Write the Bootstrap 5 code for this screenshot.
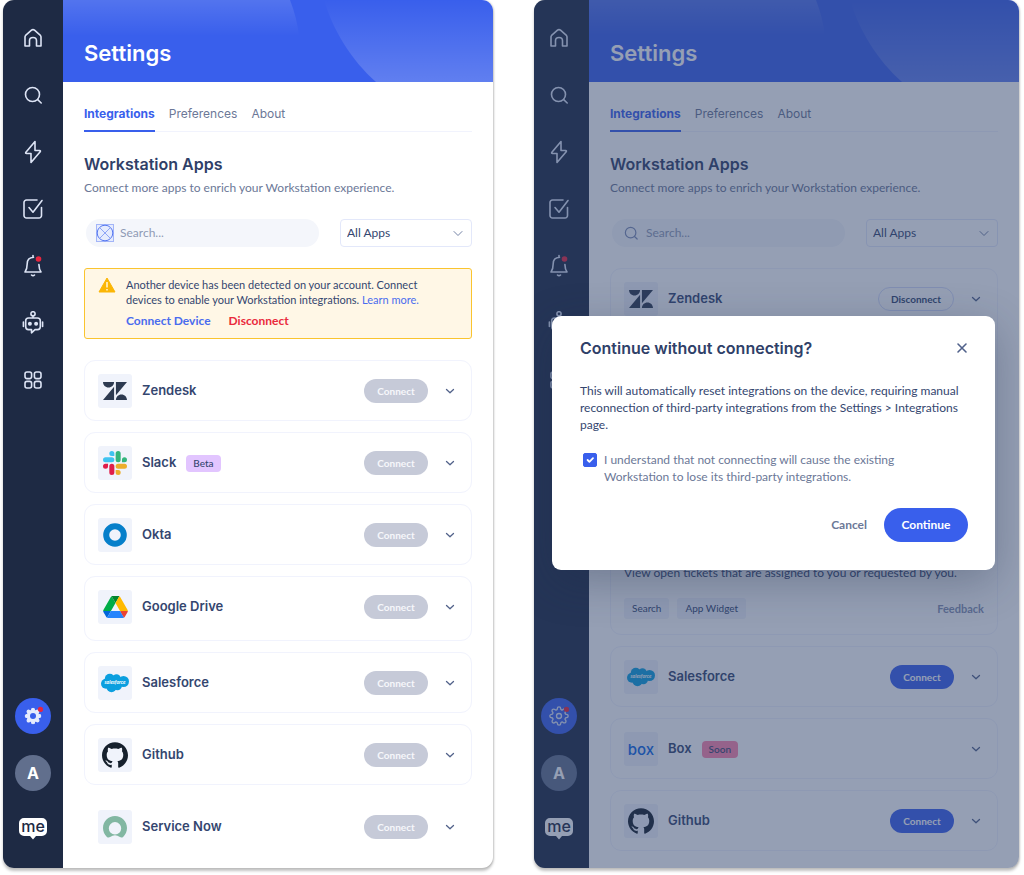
<!DOCTYPE html>
<html lang="en">
<head>
<meta charset="utf-8">
<meta name="viewport" content="width=device-width, initial-scale=1">
<title>Settings – Integrations</title>
<link href="https://cdn.jsdelivr.net/npm/bootstrap@5.3.0/dist/css/bootstrap.min.css" rel="stylesheet">
<style>
  :root { --ink: #34466f; --muted: #6c7897; --brand: #395fec; --night: #1e2a44; --line: #f1f3fd; --tile: #f0f3fb; --head-font: Inter, "Open Sans", sans-serif; }
  body { font-family: Lato, "Open Sans", sans-serif; font-size: 12px; line-height: 18px; color: var(--ink); background: #fff; }
  .stage { gap: 41px; padding: 0 5px 7px 3px; min-height: 100vh; }
  .panel { border-radius: 11px; box-shadow: 0 3px 3px rgba(0,0,0,.24), 1px 0 2px rgba(0,0,0,.14); background: #fff; overflow: hidden; min-width: 0; }
  .panel-a { flex: 490 1 0; }
  .panel-b { flex: 485 1 0; }
  .rail { width: 60px; flex: none; background: var(--night); color: #dde4f5; padding: 26px 0 22px; }
  .rail-b { width: 55px; padding-right: 5px; }
  .rail button { border: 0; padding: 0; background: none; color: inherit; display: flex; align-items: center; justify-content: center; }
  .rail-top { gap: 33px; }
  .rail-bottom { gap: 21px; }
  .rail .disc { width: 36px; height: 36px; border-radius: 50%; }
  .rail .disc-gear { background: var(--brand); }
  .rail .disc-user { background: #616f8d; color: #fff; font: 700 16px/20px var(--head-font); }
  .rail .brand-me { height: 34px; }
  .i { fill: none; stroke: currentColor; stroke-width: 1.6; stroke-linecap: round; stroke-linejoin: round; flex: none; }
  .hero { height: 82px; background: var(--brand); }
  .hero h1 { font: 600 22px/28px var(--head-font); color: #fff; margin: 0; padding: 39px 21px 0; }
  .hero svg { inset: 0; }
  .content { padding: 22px 21px 11px; }
  .tabs { gap: 14px; border-bottom: 1px solid var(--line); font: 400 12px/20px var(--head-font); }
  .tabs a { color: var(--muted); text-decoration: none; padding-bottom: 6px; margin-bottom: -1px; border-bottom: 2px solid transparent; }
  .tabs a.on { color: var(--brand); font-weight: 700; border-color: var(--brand); }
  h2 { font: 600 16px/24px var(--head-font); margin: 0; color: #2f4068; }
  .content h2 { margin-top: 20px; }
  .lede { color: var(--muted); margin: 3px 0 22px; }
  .filters { gap: 21px; padding-left: 2px; }
  .find { height: 28px; border-radius: 14px; background: #f4f6fb; padding: 0 10px; gap: 6px; color: #7d8cb5; min-width: 0; }
  .find input { border: 0; background: none; outline: 0; padding: 0; min-width: 0; color: var(--ink); line-height: 18px; }
  .find input::placeholder { color: #8f9ab5; opacity: 1; }
  .pick { width: 132px; height: 28px; flex: none; font-size: 12px; line-height: 18px; padding: 0 24px 0 6px; color: var(--ink); border: 1px solid #e3e8fa; border-radius: 4px; background-position: right 6px center; background-size: 14px 14px;
    background-image: url("data:image/svg+xml,%3csvg xmlns='http://www.w3.org/2000/svg' viewBox='0 0 14 14' fill='none' stroke='%237382a5' stroke-linecap='round' stroke-linejoin='round'%3e%3cpath d='M3 5.500l4 4 4-4'/%3e%3c/svg%3e"); }
  .notice { margin-top: 21px; padding: 8px 13px; gap: 10px; border: 1px solid #fac42f; border-radius: 3px; background: #fff7e6; font-size: 11px; line-height: 15px; }
  .notice-text { max-width: 312px; }
  .notice a { color: #4a6cee; text-decoration: none; }
  .notice .acts { gap: 18px; font-size: 12px; line-height: 18px; font-weight: 700; margin-top: 5px; }
  .notice .acts button { border: 0; background: none; padding: 0; font-weight: 700; color: #4a6cee; }
  .notice .acts .stop { color: #ea2a3c; }
  .apps { margin-top: 21px; gap: 11px; }
  .app { border: 1px solid var(--line); border-radius: 11px; padding: 13px 15px 12px 13px; }
  .app-tall { padding-bottom: 16px; }
  .app-plain { border-color: transparent; }
  .tile { width: 34px; height: 34px; background: var(--tile); border-radius: 3px; flex: none; }
  .app h3 { font: 600 13px/18px var(--head-font); margin: 0 0 2px 10px; color: var(--ink); }
  .tag { margin-left: 10px; padding: 0 7px; border-radius: 4px; font-size: 10px; line-height: 17px; font-weight: 500; background: #e2c5ff; color: var(--ink); }
  .tag-soon { background: #ff86ac; }
  .pill { border: 0; border-radius: 12px; height: 24px; width: 64px; font-size: 10px; line-height: 14px; font-weight: 700; padding: 0; background: var(--brand); color: #fff; }
  .pill:disabled { background: #c6cad8; color: #f6f7fb; }
  .pill-line { width: 76px; background: none; border: 1px solid #d5dcfa; color: var(--ink); }
  .more { border: 0; background: none; padding: 0; margin-left: 16px; color: #52628a; line-height: 0; }
  .more .i { stroke-width: 1.3; }
  .detail { min-height: 303px; margin-bottom: 3px; gap: 16px; }
  .detail p { margin: 0; }
  .chip { background: var(--tile); border-radius: 3px; font-size: 10px; line-height: 21px; padding: 0 8px; }
  .detail a { font-size: 11px; font-weight: 700; color: #8893b3; text-decoration: none; margin-right: -2px; }
  .scrim { inset: 0; background: rgba(46,66,107,.507); padding: 18px 24px 0 18px; }
  .ask { background: #fff; border-radius: 9px; padding: 20px 27px 28px 28px; box-shadow: 0 12px 44px rgba(30,42,68,.3); }
  .ask p { margin: 22px 0 18px; line-height: 17px; }
  .ask .shut { border: 0; background: none; padding: 0; color: #50618a; line-height: 0; }
  .ask .tick { gap: 7px; padding-left: 3px; line-height: 17px; color: var(--muted); }
  .ask .tick label { max-width: 305px; }
  .ask .form-check-input { width: 14px; height: 14px; margin: 2px 0 0; border-radius: 2px; flex: none; }
  .ask .form-check-input:checked { background-color: var(--brand); border-color: var(--brand); }
  .ask .acts { gap: 17px; margin-top: 23px; }
  .ask .acts button { border: 0; background: none; padding: 0; font-weight: 700; color: var(--muted); }
  .ask .acts .go { width: 84px; height: 34px; border-radius: 17px; background: var(--brand); color: #fff; }
  .logo-text { text-anchor: middle; }
  .logo-me { font: 500 16px Inter, sans-serif; fill: var(--night); }
  .logo-box { font: 500 15px Inter, sans-serif; fill: #0b66e4; }
  .logo-sf { font: italic 700 5px Lato, sans-serif; fill: #fff; }
</style>
</head>
<body>
<svg width="0" height="0" class="position-absolute" aria-hidden="true">
  <symbol id="home" viewBox="0 0 24 24"><path d="M4 20V11q0-.9.600-1.600L10.500 4.200Q12 2.900 13.500 4.200L19.400 9.400Q20 10.100 20 11V20H15.500V14.700q0-3.200-3.500-3.200T8.500 14.700V20Z"/></symbol>
  <symbol id="search" viewBox="0 0 24 24"><circle cx="11.500" cy="11.500" r="7"/><path d="M16.700 16.700l3.500 3.300"/></symbol>
  <symbol id="bolt" viewBox="0 0 24 24"><path d="M14 1.500L4.900 12.200q-.8 1.300.6 1.300H10V22.500L19.200 11.800q.7-1.300-.6-1.300H14Z"/></symbol>
  <symbol id="check" viewBox="0 0 24 24"><path d="M20.500 10.500v8a2.500 2.500 0 0 1-2.500 2.500H5.500A2.500 2.500 0 0 1 3 18.500v-13A2.500 2.500 0 0 1 5.500 3H16"/><path d="M8 10.500l4 4.700L21 3.500"/></symbol>
  <symbol id="bell" viewBox="0 0 24 24"><path d="M12 1.500v2M12.500 3.300C8 3.600 6.200 6.400 6.200 9.800c0 3.800-.7 6.200-2.200 8.200h16c-1.300-1.800-2-4-2.100-7.500"/><path d="M10.500 21q1.500 1.500 3 0"/><circle cx="17.500" cy="5" r="2.800" fill="#e8263f" stroke="none"/></symbol>
  <symbol id="bot" viewBox="0 0 24 24"><circle cx="12" cy="2.800" r="2.100"/><path d="M12 5v2M7.500 7h9q2.800 0 2.800 2.800v6q0 2.800-2.800 2.800h-2.500l-3.500 3.200V18.600H7.500q-2.800 0-2.800-2.800v-6Q4.700 7 7.500 7ZM2.400 11v4.500M21.600 11v4.500"/><circle cx="8.900" cy="12.800" r="1.200" fill="currentColor"/><circle cx="15.100" cy="12.800" r="1.200" fill="currentColor"/></symbol>
  <symbol id="grid" viewBox="0 0 24 24"><rect x="4" y="4" width="6.600" height="6.600" rx="2"/><rect x="13.400" y="4" width="6.600" height="6.600" rx="2"/><rect x="4" y="13.400" width="6.600" height="6.600" rx="2"/><rect x="13.400" y="13.400" width="6.600" height="6.600" rx="2"/></symbol>
  <symbol id="gear" viewBox="0 0 24 24"><path d="M19.4 15a1.65 1.65 0 0 0 .33 1.82l.06.06a2 2 0 0 1 0 2.830 2 2 0 0 1-2.830 0l-.06-.06a1.650 1.650 0 0 0-1.820-.33 1.650 1.650 0 0 0-1 1.510V21a2 2 0 0 1-2 2 2 2 0 0 1-2-2v-.09A1.650 1.650 0 0 0 9 19.400a1.650 1.650 0 0 0-1.820.33l-.06.06a2 2 0 0 1-2.830 0 2 2 0 0 1 0-2.830l.06-.06a1.650 1.650 0 0 0 .33-1.820 1.650 1.650 0 0 0-1.510-1H3a2 2 0 0 1-2-2 2 2 0 0 1 2-2h.09A1.650 1.650 0 0 0 4.600 9a1.650 1.650 0 0 0-.33-1.820l-.06-.06a2 2 0 0 1 0-2.830 2 2 0 0 1 2.830 0l.06.06a1.650 1.650 0 0 0 1.820.33H9a1.650 1.650 0 0 0 1-1.510V3a2 2 0 0 1 2-2 2 2 0 0 1 2 2v.09a1.650 1.650 0 0 0 1 1.510 1.650 1.650 0 0 0 1.820-.33l.06-.06a2 2 0 0 1 2.830 0 2 2 0 0 1 0 2.830l-.06.06a1.650 1.650 0 0 0-.33 1.820V9a1.650 1.650 0 0 0 1.510 1H21a2 2 0 0 1 2 2 2 2 0 0 1-2 2h-.09a1.650 1.650 0 0 0-1.510 1z"/></symbol>
  <symbol id="bubble" viewBox="0 0 28 22"><path fill="currentColor" d="M5 0h18a5 5 0 0 1 5 5v8a5 5 0 0 1-5 5h-6l-3 3.500L11 18H5a5 5 0 0 1-5-5V5a5 5 0 0 1 5-5Z"/></symbol>
  <symbol id="down" viewBox="0 0 12 12"><path d="M2.500 4.500L6 7.700l3.500-3.200"/></symbol>
  <symbol id="zendesk" viewBox="0 0 24 24"><path fill="#2d3a50" d="M12.914 2.904V16.290L24 2.905H12.914zM0 2.906C0 5.966 2.483 8.450 5.543 8.450s5.542-2.484 5.543-5.544H0zm11.086 4.807L0 21.096h11.086V7.713zm7.370 7.840c-3.063 0-5.542 2.480-5.542 5.543H24c0-3.060-2.480-5.543-5.543-5.543z"/></symbol>
  <symbol id="cloud" viewBox="0 0 28 20"><g fill="#0b9fdf"><circle cx="8.800" cy="5.700" r="5"/><circle cx="15.500" cy="5.500" r="4.200"/><circle cx="22.500" cy="8.500" r="5.500"/><circle cx="5" cy="10.800" r="5"/><circle cx="10.500" cy="14.200" r="5"/><circle cx="16.500" cy="13" r="4.300"/><path d="M8 5h14v8H8z"/></g></symbol>
  <symbol id="github" viewBox="0 0 24 24"><path fill="#16202c" d="M12 .297c-6.630 0-12 5.373-12 12 0 5.303 3.438 9.800 8.205 11.385.6.113.82-.258.82-.577 0-.285-.01-1.040-.015-2.040-3.338.724-4.042-1.610-4.042-1.610C4.422 18.070 3.633 17.700 3.633 17.700c-1.087-.744.084-.729.084-.729 1.205.084 1.838 1.236 1.838 1.236 1.070 1.835 2.809 1.305 3.495.998.108-.776.417-1.305.76-1.605-2.665-.3-5.466-1.332-5.466-5.930 0-1.310.465-2.380 1.235-3.220-.135-.303-.54-1.523.105-3.176 0 0 1.005-.322 3.300 1.230.96-.267 1.980-.399 3-.405 1.020.006 2.040.138 3 .405 2.280-1.552 3.285-1.230 3.285-1.230.645 1.653.24 2.873.12 3.176.765.84 1.230 1.910 1.230 3.220 0 4.610-2.805 5.625-5.475 5.920.42.36.81 1.096.81 2.220 0 1.606-.015 2.896-.015 3.286 0 .315.21.69.825.57C20.565 22.092 24 17.592 24 12.297c0-6.627-5.373-12-12-12"/></symbol>
  <symbol id="waves" viewBox="0 0 430 82"><path fill="url(#fadeOut)" d="M0 0H227Q234 18 236 36H0Z"/><path fill="url(#fadeIn)" d="M261 0C270 30 288 60 313 82H430V0Z"/></symbol>
  <symbol id="slackPetal" viewBox="0 0 24 24" overflow="visible"><path d="M5.042 15.165a2.528 2.528 0 0 1-2.520 2.523A2.528 2.528 0 0 1 0 15.165a2.527 2.527 0 0 1 2.522-2.520h2.520v2.520zM6.313 15.165a2.527 2.527 0 0 1 2.521-2.520 2.527 2.527 0 0 1 2.521 2.520v6.313A2.528 2.528 0 0 1 8.834 24a2.528 2.528 0 0 1-2.521-2.522v-6.313z"/></symbol>
  <defs>
    <linearGradient id="fadeOut" x1="0" y1="0" x2="0" y2="1"><stop stop-color="#fff" stop-opacity=".13"/><stop offset="1" stop-color="#fff" stop-opacity="0"/></linearGradient>
    <linearGradient id="fadeIn" x1="0" y1="0" x2="0" y2="1"><stop stop-color="#fff" stop-opacity="0"/><stop offset="1" stop-color="#fff" stop-opacity=".2"/></linearGradient>
  </defs>
</svg>

<div class="stage d-flex align-items-stretch">

  <section class="panel panel-a d-flex">
    <nav class="rail d-flex flex-column align-items-center justify-content-between" aria-label="Main">
      <div class="rail-top d-flex flex-column align-items-center">
        <button type="button" aria-label="Home"><svg class="i" width="24" height="24"><use href="#home"/></svg></button>
        <button type="button" aria-label="Search"><svg class="i" width="24" height="24"><use href="#search"/></svg></button>
        <button type="button" aria-label="Actions"><svg class="i" width="24" height="24"><use href="#bolt"/></svg></button>
        <button type="button" aria-label="Tasks"><svg class="i" width="24" height="24"><use href="#check"/></svg></button>
        <button type="button" aria-label="Alerts"><svg class="i" width="24" height="24"><use href="#bell"/></svg></button>
        <button type="button" aria-label="Assistant"><svg class="i" width="24" height="24"><use href="#bot"/></svg></button>
        <button type="button" aria-label="Apps"><svg class="i" width="24" height="24"><use href="#grid"/></svg></button>
      </div>
      <div class="rail-bottom d-flex flex-column align-items-center">
        <button type="button" class="disc disc-gear" aria-label="Settings"><svg class="i" width="20" height="20" viewBox="0 0 24 24"><g transform="translate(1.800 1.800) scale(.85)" fill="#e6ecfd" stroke="#e6ecfd"><use href="#gear" width="24" height="24"/></g><circle cx="12" cy="12" r="3.600" fill="#395fec" stroke="none"/><circle cx="21" cy="4" r="3.200" fill="#e8263f" stroke="none"/></svg></button>
        <button type="button" class="disc disc-user">A</button>
        <button type="button" class="brand-me text-white" aria-label="Home page"><svg width="28" height="22" viewBox="0 0 28 22"><use href="#bubble" width="28" height="22"/><text class="logo-text logo-me" x="14" y="14">me</text></svg></button>
      </div>
    </nav>
    <div class="flex-grow-1">
      <header class="hero position-relative">
        <svg class="position-absolute w-100 h-100" viewBox="0 0 430 82" preserveAspectRatio="xMaxYMin slice" aria-hidden="true"><use href="#waves" width="430" height="82"/></svg>
        <h1 class="position-relative">Settings</h1>
      </header>
      <main class="content">
        <nav class="tabs d-flex" aria-label="Settings sections"><a class="on" href="#">Integrations</a><a href="#">Preferences</a><a href="#">About</a></nav>
        <h2>Workstation Apps</h2>
        <p class="lede">Connect more apps to enrich your Workstation experience.</p>
        <div class="filters d-flex">
          <div class="find d-flex align-items-center flex-grow-1">
            <svg width="18" height="18" viewBox="0 0 18 18" fill="none" stroke="#5577f0" class="flex-shrink-0" aria-hidden="true"><rect x=".5" y=".5" width="17" height="17" stroke="#a3b5f8" fill="#e5ebfd"/><circle cx="9" cy="9" r="7.800"/><path d="M3.500 3.500l11 11M14.500 3.500l-11 11" stroke="#8ea5f6"/></svg>
            <input type="text" class="flex-grow-1" placeholder="Search..." aria-label="Search apps">
          </div>
          <select class="form-select pick" aria-label="Filter apps"><option>All Apps</option></select>
        </div>

        <div class="notice d-flex" role="alert">
          <svg width="18" height="16" viewBox="0 0 18 16" class="flex-shrink-0" aria-hidden="true"><path fill="#fbb605" stroke="#fbb605" stroke-linejoin="round" d="M9 1l8 14H1Z"/><path d="M9 5v5.500M9 12v1.500" stroke="#fff" stroke-width="1.300"/></svg>
          <div class="notice-text">
            <div>Another device has been detected on your account. Connect devices to enable your Workstation integrations. <a href="#">Learn more.</a></div>
            <div class="acts d-flex"><button type="button">Connect Device</button><button type="button" class="stop">Disconnect</button></div>
          </div>
        </div>

        <div class="apps d-flex flex-column">
          <article class="app d-flex align-items-center">
            <span class="tile d-flex align-items-center justify-content-center"><svg width="24" height="24"><use href="#zendesk"/></svg></span>
            <h3>Zendesk</h3>
            <button type="button" class="pill ms-auto" disabled>Connect</button>
            <button type="button" class="more" aria-label="Show Zendesk"><svg class="i" width="12" height="12"><use href="#down"/></svg></button>
          </article>
          <article class="app d-flex align-items-center">
            <span class="tile d-flex align-items-center justify-content-center"><svg width="24" height="24" viewBox="0 0 24 24"><use href="#slackPetal" width="24" height="24" fill="#e01e4a"/><use href="#slackPetal" width="24" height="24" fill="#3fc3f0" transform="rotate(90 12 12)"/><use href="#slackPetal" width="24" height="24" fill="#33b57c" transform="rotate(180 12 12)"/><use href="#slackPetal" width="24" height="24" fill="#ecae2c" transform="rotate(270 12 12)"/></svg></span>
            <h3>Slack</h3><span class="tag">Beta</span>
            <button type="button" class="pill ms-auto" disabled>Connect</button>
            <button type="button" class="more" aria-label="Show Slack"><svg class="i" width="12" height="12"><use href="#down"/></svg></button>
          </article>
          <article class="app d-flex align-items-center">
            <span class="tile d-flex align-items-center justify-content-center"><svg width="24" height="24" viewBox="0 0 24 24"><circle cx="12" cy="12" r="8.800" fill="none" stroke="#067fca" stroke-width="6"/></svg></span>
            <h3>Okta</h3>
            <button type="button" class="pill ms-auto" disabled>Connect</button>
            <button type="button" class="more" aria-label="Show Okta"><svg class="i" width="12" height="12"><use href="#down"/></svg></button>
          </article>
          <article class="app app-tall d-flex align-items-center">
            <span class="tile d-flex align-items-center justify-content-center"><svg width="25" height="22" viewBox="0 0 87.300 78"><path d="m6.600 66.850 3.850 6.650c.8 1.400 1.950 2.500 3.300 3.300l13.750-23.800h-27.500c0 1.550.4 3.100 1.200 4.500z" fill="#0066da"/><path d="m43.650 25-13.750-23.800c-1.350.8-2.500 1.900-3.300 3.300l-25.400 44a9.060 9.060 0 0 0 -1.200 4.500h27.500z" fill="#00ac47"/><path d="m73.550 76.800c1.350-.8 2.500-1.900 3.300-3.300l1.600-2.750 7.650-13.250c.8-1.400 1.200-2.950 1.200-4.500h-27.502l5.852 11.500z" fill="#ea4335"/><path d="m43.650 25 13.750-23.800c-1.350-.8-2.900-1.200-4.500-1.200h-18.500c-1.600 0-3.150.45-4.500 1.200z" fill="#00832d"/><path d="m59.800 53h-32.300l-13.750 23.800c1.350.8 2.900 1.200 4.500 1.200h50.800c1.600 0 3.150-.45 4.500-1.200z" fill="#2684fc"/><path d="m73.400 26.500-12.700-22c-.8-1.400-1.950-2.500-3.300-3.300l-13.750 23.800 16.150 28h27.450c0-1.550-.4-3.100-1.200-4.500z" fill="#ffba00"/></svg></span>
            <h3>Google Drive</h3>
            <button type="button" class="pill ms-auto" disabled>Connect</button>
            <button type="button" class="more" aria-label="Show Google Drive"><svg class="i" width="12" height="12"><use href="#down"/></svg></button>
          </article>
          <article class="app d-flex align-items-center">
            <span class="tile d-flex align-items-center justify-content-center"><svg width="28" height="20" viewBox="0 0 28 20"><use href="#cloud" width="28" height="20"/><text class="logo-text logo-sf" x="14" y="11">salesforce</text></svg></span>
            <h3>Salesforce</h3>
            <button type="button" class="pill ms-auto" disabled>Connect</button>
            <button type="button" class="more" aria-label="Show Salesforce"><svg class="i" width="12" height="12"><use href="#down"/></svg></button>
          </article>
          <article class="app d-flex align-items-center">
            <span class="tile d-flex align-items-center justify-content-center"><svg width="26" height="26"><use href="#github"/></svg></span>
            <h3>Github</h3>
            <button type="button" class="pill ms-auto" disabled>Connect</button>
            <button type="button" class="more" aria-label="Show Github"><svg class="i" width="12" height="12"><use href="#down"/></svg></button>
          </article>
          <article class="app app-plain d-flex align-items-center">
            <span class="tile d-flex align-items-center justify-content-center"><svg width="24" height="24" viewBox="0 0 24 24"><path fill="#82b7a2" fill-rule="evenodd" d="M12 1C5.400 1 0 6.400 0 13c0 3.500 1.500 6.700 3.900 8.900.9.8 2.200.9 3.200.2a8 8 0 0 1 9.800 0c1 .7 2.300.6 3.200-.2C22.500 19.700 24 16.500 24 13 24 6.400 18.600 1 12 1zm0 18.500a6.200 6.200 0 1 1 0-12.400 6.200 6.200 0 0 1 0 12.400z"/></svg></span>
            <h3>Service Now</h3>
            <button type="button" class="pill ms-auto" disabled>Connect</button>
            <button type="button" class="more" aria-label="Show Service Now"><svg class="i" width="12" height="12"><use href="#down"/></svg></button>
          </article>
        </div>
      </main>
    </div>
  </section>

  <section class="panel panel-b d-flex position-relative">
    <nav class="rail rail-b d-flex flex-column align-items-center justify-content-between" aria-label="Main">
      <div class="rail-top d-flex flex-column align-items-center">
        <button type="button" aria-label="Home"><svg class="i" width="24" height="24"><use href="#home"/></svg></button>
        <button type="button" aria-label="Search"><svg class="i" width="24" height="24"><use href="#search"/></svg></button>
        <button type="button" aria-label="Actions"><svg class="i" width="24" height="24"><use href="#bolt"/></svg></button>
        <button type="button" aria-label="Tasks"><svg class="i" width="24" height="24"><use href="#check"/></svg></button>
        <button type="button" aria-label="Alerts"><svg class="i" width="24" height="24"><use href="#bell"/></svg></button>
        <button type="button" aria-label="Assistant"><svg class="i" width="24" height="24"><use href="#bot"/></svg></button>
        <button type="button" aria-label="Apps"><svg class="i" width="24" height="24"><use href="#grid"/></svg></button>
      </div>
      <div class="rail-bottom d-flex flex-column align-items-center">
        <button type="button" class="disc disc-gear" aria-label="Settings"><svg class="i" width="20" height="20" viewBox="0 0 24 24" stroke-width="2"><use href="#gear" width="24" height="24"/><circle cx="12" cy="12" r="3"/><circle cx="21" cy="4" r="3.200" fill="#e8263f" stroke="none"/></svg></button>
        <button type="button" class="disc disc-user">A</button>
        <button type="button" class="brand-me text-white" aria-label="Home page"><svg width="28" height="22" viewBox="0 0 28 22"><use href="#bubble" width="28" height="22"/><text class="logo-text logo-me" x="14" y="14">me</text></svg></button>
      </div>
    </nav>
    <div class="flex-grow-1">
      <header class="hero position-relative">
        <svg class="position-absolute w-100 h-100" viewBox="0 0 430 82" preserveAspectRatio="xMaxYMin slice" aria-hidden="true"><use href="#waves" width="430" height="82"/></svg>
        <h1 class="position-relative">Settings</h1>
      </header>
      <div class="content">
        <nav class="tabs d-flex" aria-label="Settings sections"><a class="on" href="#">Integrations</a><a href="#">Preferences</a><a href="#">About</a></nav>
        <h2>Workstation Apps</h2>
        <p class="lede">Connect more apps to enrich your Workstation experience.</p>
        <div class="filters d-flex">
          <div class="find d-flex align-items-center flex-grow-1">
            <svg class="i" width="18" height="18" aria-hidden="true"><use href="#search"/></svg>
            <input type="text" class="flex-grow-1" placeholder="Search..." aria-label="Search apps">
          </div>
          <select class="form-select pick" aria-label="Filter apps"><option>All Apps</option></select>
        </div>

        <div class="apps d-flex flex-column">
          <article class="app">
            <div class="d-flex align-items-center">
              <span class="tile d-flex align-items-center justify-content-center"><svg width="24" height="24"><use href="#zendesk"/></svg></span>
              <h3>Zendesk</h3>
              <button type="button" class="pill pill-line ms-auto">Disconnect</button>
              <button type="button" class="more" aria-label="Hide Zendesk"><svg class="i" width="12" height="12"><use href="#down"/></svg></button>
            </div>
            <div class="detail d-flex flex-column justify-content-end">
              <p>View open tickets that are assigned to you or requested by you.</p>
              <div class="d-flex align-items-center gap-2"><span class="chip">Search</span><span class="chip">App Widget</span><a class="ms-auto" href="#">Feedback</a></div>
            </div>
          </article>
          <article class="app d-flex align-items-center">
            <span class="tile d-flex align-items-center justify-content-center"><svg width="28" height="20" viewBox="0 0 28 20"><use href="#cloud" width="28" height="20"/><text class="logo-text logo-sf" x="14" y="11">salesforce</text></svg></span>
            <h3>Salesforce</h3>
            <button type="button" class="pill ms-auto">Connect</button>
            <button type="button" class="more" aria-label="Show Salesforce"><svg class="i" width="12" height="12"><use href="#down"/></svg></button>
          </article>
          <article class="app d-flex align-items-center">
            <span class="tile d-flex align-items-center justify-content-center"><svg width="32" height="24" viewBox="0 0 32 24"><text class="logo-text logo-box" x="16" y="18">box</text></svg></span>
            <h3>Box</h3><span class="tag tag-soon">Soon</span>
            <button type="button" class="more ms-auto" aria-label="Show Box"><svg class="i" width="12" height="12"><use href="#down"/></svg></button>
          </article>
          <article class="app d-flex align-items-center">
            <span class="tile d-flex align-items-center justify-content-center"><svg width="26" height="26"><use href="#github"/></svg></span>
            <h3>Github</h3>
            <button type="button" class="pill ms-auto">Connect</button>
            <button type="button" class="more" aria-label="Show Github"><svg class="i" width="12" height="12"><use href="#down"/></svg></button>
          </article>
        </div>
      </div>
    </div>

    <div class="scrim position-absolute d-flex align-items-center">
      <div class="ask w-100" role="dialog" aria-modal="true" aria-labelledby="ask-title">
        <div class="d-flex align-items-center justify-content-between">
          <h2 id="ask-title">Continue without connecting?</h2>
          <button type="button" class="shut" aria-label="Close"><svg class="i" width="12" height="12" viewBox="0 0 12 12"><path d="M2 2l8 8M10 2l-8 8"/></svg></button>
        </div>
        <p>This will automatically reset integrations on the device, requiring manual reconnection of third-party integrations from the Settings &gt; Integrations page.</p>
        <div class="tick d-flex">
          <input class="form-check-input" type="checkbox" id="agree" checked>
          <label for="agree">I understand that not connecting will cause the existing Workstation to lose its third-party integrations.</label>
        </div>
        <div class="acts d-flex justify-content-end align-items-center"><button type="button">Cancel</button><button type="button" class="go">Continue</button></div>
      </div>
    </div>
  </section>
</div>
<script src="https://cdn.jsdelivr.net/npm/bootstrap@5.3.0/dist/js/bootstrap.bundle.min.js"></script>
</body>
</html>
